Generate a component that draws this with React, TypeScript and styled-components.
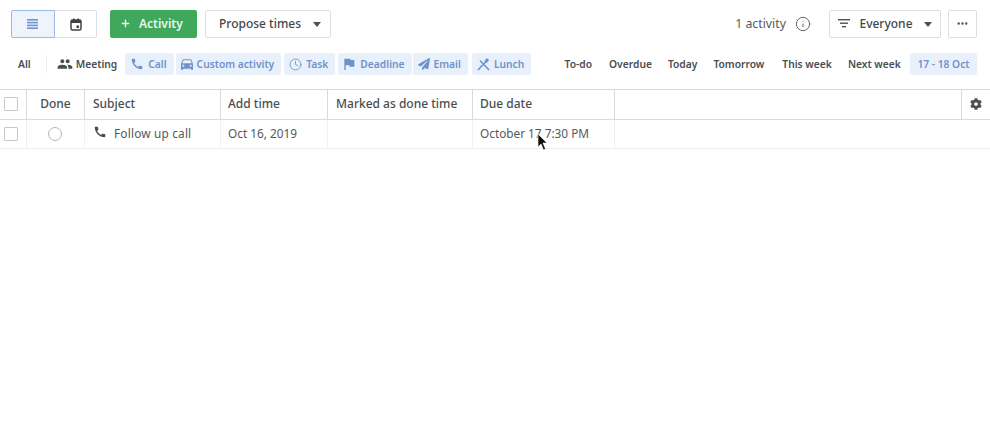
import React from "react";
import styled, { createGlobalStyle } from "styled-components";
import { Plus, Clock, Info, MoreHorizontal } from "lucide-react";
import { MdCall, MdPeople, MdDirectionsCar, MdFlag } from "react-icons/md";
import { FaCog, FaPaperPlane } from "react-icons/fa";

const Global = createGlobalStyle`
  html, body { margin: 0; padding: 0; background: #fff; }
  body { font-family: "Noto Sans", "Open Sans", sans-serif; color: #3c4043; }
`;

const Page = styled.div`
  width: 990px;
  height: 422px;
  position: relative;
  overflow: hidden;
  background: #fff;
`;

const Toolbar = styled.div`
  display: flex;
  align-items: center;
  height: 28px;
  padding: 10px 13px 0 11px;
`;

const Segment = styled.div`
  display: flex;
  height: 28px;
  margin-right: 13px;
`;

const SegmentButton = styled.div<{ $active?: boolean }>`
  width: ${(p) => (p.$active ? 44 : 42)}px;
  box-sizing: border-box;
  display: flex;
  align-items: center;
  justify-content: center;
  background: ${(p) => (p.$active ? "#eff4fc" : "#fff")};
  border: 1px solid ${(p) => (p.$active ? "#9db8e2" : "#dcdedf")};
  border-left-width: ${(p) => (p.$active ? 1 : 0)}px;
  border-radius: ${(p) => (p.$active ? "2px 0 0 2px" : "0 2px 2px 0")};
`;

const GreenButton = styled.div`
  width: 87px;
  height: 28px;
  box-sizing: border-box;
  padding: 0 0 2px 10px;
  display: flex;
  align-items: center;
  gap: 8px;
  border-radius: 2px;
  background: #3fa85c;
  color: #e9f6ec;
  font-size: 12px;
  font-weight: 600;
  margin-right: 8px;
`;

const OutlineButton = styled.div<{ $w: number; $pl?: number }>`
  width: ${(p) => p.$w}px;
  height: 28px;
  box-sizing: border-box;
  padding: 0 0 2px ${(p) => p.$pl ?? 0}px;
  display: flex;
  align-items: center;
  justify-content: center;
  border: 1px solid #dcdedf;
  border-radius: 2px;
  background: #fff;
  font-size: 12px;
  font-weight: 500;
  color: #43474a;
`;

const Caret = styled.span<{ $gap: number }>`
  width: 0;
  height: 0;
  margin: 2px 0 0 ${(p) => p.$gap}px;
  border-left: 4.500px solid transparent;
  border-right: 4.500px solid transparent;
  border-top: 5px solid #4d5154;
`;

const Spacer = styled.div`
  flex: 1;
`;

const SmallGap = styled.div`
  width: 7px;
`;

const CountText = styled.span`
  font-size: 12.300px;
  color: #55595c;
  margin: -2px 9px 0 0;
`;

const InfoSlot = styled.span`
  display: flex;
  margin: -1px 18px 0 0;
`;

const FilterIconSlot = styled.svg`
  margin: 1px 9px 0 0;
`;

const FilterRow = styled.div`
  display: flex;
  align-items: center;
  height: 22px;
  margin-top: 15px;
  padding-left: 13px;
`;

const PlainFilter = styled.span<{ $mr?: number }>`
  display: flex;
  align-items: center;
  gap: 3px;
  height: 22px;
  padding: 0 5px;
  margin-right: ${(p) => p.$mr ?? 0}px;
  font-size: 10.250px;
  font-weight: 600;
  color: #4a4e51;
  white-space: nowrap;
`;

const Divider = styled.span`
  width: 1px;
  height: 18px;
  background: #eeeff0;
  margin: 0 6px 0 10px;
`;

const Chip = styled.span<{ $mr?: number }>`
  display: flex;
  align-items: center;
  gap: 4px;
  height: 22px;
  padding: 0 7px 0 5px;
  margin-right: ${(p) => p.$mr ?? 2}px;
  border-radius: 3px;
  background: #e8f0fb;
  color: #6f93c9;
  font-size: 10.250px;
  font-weight: 600;
  white-space: nowrap;
`;

const DateChip = styled(Chip)`
  padding: 0 7.500px;
  margin-right: 13px;
`;

const Table = styled.div`
  margin-top: 14px;
`;

const Row = styled.div<{ $head?: boolean }>`
  display: grid;
  grid-template-columns: 27px 58px 136px 107px 145px 142px 347px 28px;
  height: ${(p) => (p.$head ? 29 : 28)}px;
  border-top: ${(p) => (p.$head ? "1px solid #d9dadb" : "none")};
  border-bottom: 1px solid ${(p) => (p.$head ? "#d9dadb" : "#edeeee")};
`;

const Cell = styled.div<{ $head?: boolean; $center?: boolean; $open?: boolean; $tight?: boolean }>`
  display: flex;
  align-items: center;
  justify-content: ${(p) => (p.$center ? "center" : "flex-start")};
  padding: ${(p) => (p.$center ? "0 0 2px" : `0 8px 2px ${p.$tight ? 7 : 8}px`)};
  box-sizing: border-box;
  border-right: 1px solid ${(p) => (p.$open ? "transparent" : p.$head ? "#d9dadb" : "#f0f0f1")};
  font-size: ${(p) => (p.$head ? 12 : 11.800)}px;
  font-weight: ${(p) => (p.$head ? 500 : 400)};
  color: ${(p) => (p.$head ? "#4a4e51" : "#55595c")};
  white-space: nowrap;
`;

const Check = styled.span<{ $up?: boolean }>`
  width: 12px;
  height: 12px;
  border: 1.500px solid #c6c8ca;
  border-radius: 1px;
  margin: ${(p) => (p.$up ? 1 : 2)}px 0 0 -4px;
`;

const Radio = styled.span`
  width: 12px;
  height: 12px;
  border: 1px solid #b3b5b7;
  border-radius: 50%;
  margin: 2px 2px 0 0;
`;

const SubjectIcon = styled.span`
  display: flex;
  margin: -3px 7px 0 0;
`;

const SubjectText = styled.span`
  letter-spacing: 0.200px;
`;

const Cursor = styled.svg`
  position: absolute;
  left: 537px;
  top: 134px;
`;

const PeopleIcon = styled(MdPeople)`
  margin-left: -1px;
`;

const CarIcon = styled(MdDirectionsCar)`
  margin: 0 -2px;
`;

const FlagIcon = styled(MdFlag)`
  margin: 0 -1px 0 -2px;
`;

const ListIcon = () => (
  <svg width="12" height="10" viewBox="0 0 12 10" fill="#6f93d6">
    <rect y="0" width="11" height="1.600" /><rect y="2.800" width="11" height="1.600" />
    <rect y="5.600" width="11" height="1.600" /><rect y="8.400" width="11" height="1.600" />
  </svg>
);

const CalIcon = () => (
  <svg width="12" height="13" viewBox="0 0 12 13">
    <rect x="1" y="2" width="10" height="10" rx="1.500" fill="none" stroke="#3f4346" strokeWidth="1.500" />
    <rect x="1" y="2" width="10" height="3" fill="#3f4346" />
    <rect x="3" y="0.500" width="1.500" height="2" fill="#3f4346" /><rect x="7.500" y="0.500" width="1.500" height="2" fill="#3f4346" />
    <rect x="6.500" y="7.500" width="2.500" height="2.500" fill="#3f4346" />
  </svg>
);

const LunchGlyph = () => (
  <svg width="13" height="13" viewBox="0 0 13 13" stroke="#6f93c9" strokeWidth="1.600" fill="none">
    <path d="M1 12L9 3.500M12 12L3 2.500" />
    <path d="M8.500 4L11 1" strokeWidth="3" />
  </svg>
);

const blue = "#6f93c9";

const chips = [
  { label: "Call", icon: <MdCall size={14} color={blue} />, mr: 2 },
  { label: "Custom activity", icon: <CarIcon size={16} color={blue} />, mr: 3 },
  { label: "Task", icon: <Clock size={13} strokeWidth={1.600} color={blue} />, mr: 3 },
  { label: "Deadline", icon: <FlagIcon size={16} color={blue} />, mr: 1 },
  { label: "Email", icon: <FaPaperPlane size={12} color={blue} />, mr: 4 },
  { label: "Lunch", icon: <LunchGlyph />, mr: 0 },
];

const times = [
  { label: "To-do", mr: 7 },
  { label: "Overdue", mr: 6 },
  { label: "Today", mr: 6 },
  { label: "Tomorrow", mr: 8 },
  { label: "This week", mr: 6 },
  { label: "Next week", mr: 4 },
];

export default function App() {
  return (
    <Page>
      <Global />
      <Toolbar>
        <Segment>
          <SegmentButton $active><ListIcon /></SegmentButton>
          <SegmentButton><CalIcon /></SegmentButton>
        </Segment>
        <GreenButton><Plus size={11} strokeWidth={3} />Activity</GreenButton>
        <OutlineButton $w={126} $pl={4}>Propose times<Caret $gap={12} /></OutlineButton>
        <Spacer />
        <CountText>1 activity</CountText>
        <InfoSlot><Info size={16} strokeWidth={1.400} color="#55595c" /></InfoSlot>
        <OutlineButton $w={112}>
          <FilterIconSlot width="12" height="9" viewBox="0 0 12 9" fill="#4d5154">
            <rect width="12" height="1.400" /><rect x="2" y="3.500" width="8" height="1.400" /><rect x="4" y="7" width="4" height="1.400" />
          </FilterIconSlot>
          Everyone<Caret $gap={11} />
        </OutlineButton>
        <SmallGap />
        <OutlineButton $w={29}><MoreHorizontal size={13} strokeWidth={2.400} color="#4d5154" /></OutlineButton>
      </Toolbar>

      <FilterRow>
        <PlainFilter>All</PlainFilter>
        <Divider />
        <PlainFilter $mr={3}><PeopleIcon size={16} />Meeting</PlainFilter>
        {chips.map((c) => (
          <Chip key={c.label} $mr={c.mr}>{c.icon}{c.label}</Chip>
        ))}
        <Spacer />
        {times.map((t) => (
          <PlainFilter key={t.label} $mr={t.mr}>{t.label}</PlainFilter>
        ))}
        <DateChip>17 - 18 Oct</DateChip>
      </FilterRow>

      <Table>
        <Row $head>
          <Cell $head $center><Check $up /></Cell>
          <Cell $head $center>Done</Cell>
          <Cell $head>Subject</Cell>
          <Cell $head $tight>Add time</Cell>
          <Cell $head>Marked as done time</Cell>
          <Cell $head $tight>Due date</Cell>
          <Cell $head />
          <Cell $head $center $open><FaCog size={12} color="#4a4e51" /></Cell>
        </Row>
        <Row>
          <Cell $center><Check /></Cell>
          <Cell $center><Radio /></Cell>
          <Cell><SubjectIcon><MdCall size={14} color="#4a4e51" /></SubjectIcon><SubjectText>Follow up call</SubjectText></Cell>
          <Cell $tight>Oct 16, 2019</Cell>
          <Cell />
          <Cell $tight>October 17 7:30 PM</Cell>
          <Cell $open />
          <Cell $open />
        </Row>
      </Table>

      <Cursor width="12" height="17" viewBox="0 0 12 17">
        <path d="M1 0l9 9H6l2.500 6-2 1L4 10l-3 3z" fill="#111" stroke="#fff" strokeWidth="0.600" />
      </Cursor>
    </Page>
  );
}
